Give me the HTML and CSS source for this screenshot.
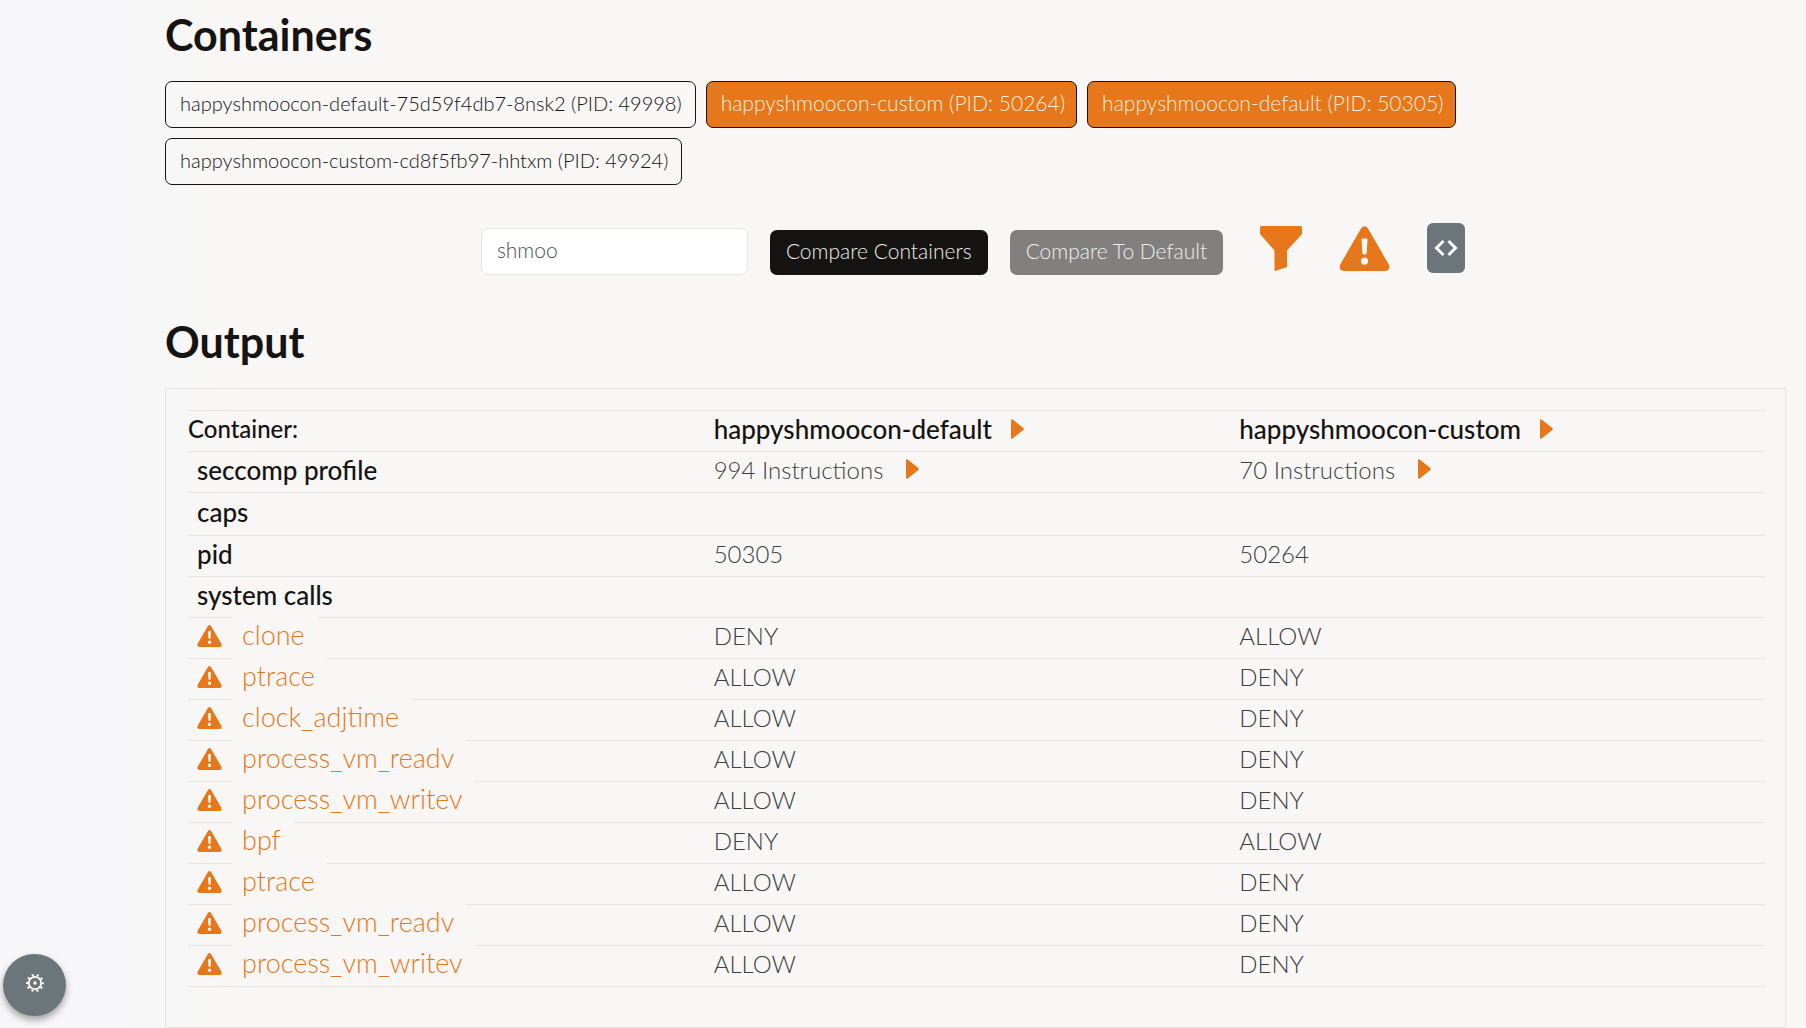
FILE: index.html
```html
<!DOCTYPE html>
<html lang="en">
<head>
<meta charset="utf-8">
<meta name="viewport" content="width=device-width, initial-scale=1">
<title>Containers</title>
<link rel="stylesheet" href="styles.css">
</head>
<body>
<svg class="sprite" aria-hidden="true">
  <symbol id="warning" viewBox="0 0 50 45"><path fill="currentColor" fill-rule="evenodd" d="M21.800 2Q25-1.600 28.200 2L49.300 38.500Q51.200 44.500 46 45H4Q-1.200 44.500.700 38.500ZM22 13.500 22.800 27Q23 28.500 25 28.500Q27 28.500 27.200 27L28 13.500Q28 12.500 26.500 12.500H23.500Q22 12.500 22 13.500ZM25 31.500A3.600 3.600 0 1 0 25 38.700A3.600 3.600 0 1 0 25 31.500Z"/></symbol>
  <symbol id="caret" viewBox="0 0 13 20"><path fill="currentColor" d="M0 1.500Q0-.5 2 .8L12.300 9Q13.300 10 12.300 11L2 19.200Q0 20.500 0 18.500Z"/></symbol>
</svg>
<main class="page">
  <section>
    <h1 class="title">Containers</h1>
    <div class="containers">
      <button class="chip" type="button">happyshmoocon-default-75d59f4db7-8nsk2 (PID: 49998)</button>
      <button class="chip selected" type="button">happyshmoocon-custom (PID: 50264)</button>
      <button class="chip selected" type="button">happyshmoocon-default (PID: 50305)</button>
      <button class="chip" type="button">happyshmoocon-custom-cd8f5fb97-hhtxm (PID: 49924)</button>
    </div>
    <div class="toolbar">
      <input class="search" type="text" value="shmoo" aria-label="Filter containers">
      <button class="btn dark" type="button">Compare Containers</button>
      <button class="btn muted" type="button">Compare To Default</button>
      <div class="tools">
        <button class="icon-btn" type="button" aria-label="Filter"><svg width="42" height="45" viewBox="0 0 42 45"><path fill="currentColor" d="M1.500 0H40.500Q42 0 42 1.500V8L27 24.500V41L15.500 45Q14.500 45 14.500 44V24.500L0 8V1.500Q0 0 1.500 0Z"/></svg></button>
        <button class="icon-btn" type="button" aria-label="Warnings"><svg width="51" height="45"><use href="#warning"/></svg></button>
        <button class="code-btn" type="button" aria-label="Show code"><svg width="24" height="18" viewBox="0 0 24 18" fill="none" stroke="currentColor" stroke-width="3"><path d="M9.500 2 2.500 9l7 7M14.500 2l7 7-7 7"/></svg></button>
      </div>
    </div>
  </section>
  <section>
    <h2 class="title">Output</h2>
    <div class="panel">
      <table class="output">
        <thead>
          <tr>
            <th class="label" scope="col">Container:</th>
            <th scope="col">happyshmoocon-default<button class="expand" type="button" aria-label="Expand happyshmoocon-default"><svg width="13" height="20"><use href="#caret"/></svg></button></th>
            <th scope="col">happyshmoocon-custom<button class="expand" type="button" aria-label="Expand happyshmoocon-custom"><svg width="13" height="20"><use href="#caret"/></svg></button></th>
          </tr>
        </thead>
        <tbody>
          <tr><th scope="row">seccomp profile</th>
            <td>994 Instructions<button class="expand wide" type="button" aria-label="Expand 994 instructions"><svg width="13" height="20"><use href="#caret"/></svg></button></td>
            <td>70 Instructions<button class="expand wide" type="button" aria-label="Expand 70 instructions"><svg width="13" height="20"><use href="#caret"/></svg></button></td></tr>
          <tr class="caps"><th scope="row">caps</th><td></td><td></td></tr>
          <tr><th scope="row">pid</th><td>50305</td><td>50264</td></tr>
          <tr><th scope="row">system calls</th><td></td><td></td></tr>
          <tr><th scope="row"><div class="call"><svg width="25" height="22"><use href="#warning"/></svg><button class="name" type="button">clone</button></div></th><td>DENY</td><td>ALLOW</td></tr>
          <tr><th scope="row"><div class="call"><svg width="25" height="22"><use href="#warning"/></svg><button class="name" type="button">ptrace</button></div></th><td>ALLOW</td><td>DENY</td></tr>
          <tr><th scope="row"><div class="call"><svg width="25" height="22"><use href="#warning"/></svg><button class="name" type="button">clock_adjtime</button></div></th><td>ALLOW</td><td>DENY</td></tr>
          <tr><th scope="row"><div class="call"><svg width="25" height="22"><use href="#warning"/></svg><button class="name" type="button">process_vm_readv</button></div></th><td>ALLOW</td><td>DENY</td></tr>
          <tr><th scope="row"><div class="call"><svg width="25" height="22"><use href="#warning"/></svg><button class="name" type="button">process_vm_writev</button></div></th><td>ALLOW</td><td>DENY</td></tr>
          <tr><th scope="row"><div class="call"><svg width="25" height="22"><use href="#warning"/></svg><button class="name" type="button">bpf</button></div></th><td>DENY</td><td>ALLOW</td></tr>
          <tr><th scope="row"><div class="call"><svg width="25" height="22"><use href="#warning"/></svg><button class="name" type="button">ptrace</button></div></th><td>ALLOW</td><td>DENY</td></tr>
          <tr><th scope="row"><div class="call"><svg width="25" height="22"><use href="#warning"/></svg><button class="name" type="button">process_vm_readv</button></div></th><td>ALLOW</td><td>DENY</td></tr>
          <tr><th scope="row"><div class="call"><svg width="25" height="22"><use href="#warning"/></svg><button class="name" type="button">process_vm_writev</button></div></th><td>ALLOW</td><td>DENY</td></tr>
        </tbody>
      </table>
    </div>
  </section>
</main>
<button class="settings" type="button" aria-label="Settings"><svg width="20" height="20" viewBox="-10 -10 20 20"><circle r="6.200" fill="none" stroke="currentColor" stroke-width="1.800"/><circle r="8" fill="none" stroke="currentColor" stroke-width="2" stroke-dasharray="2.100 2.927" stroke-dashoffset="1.050"/><circle r="1.700" fill="currentColor"/></svg></button>
</body>
</html>
```
FILE: styles.css
```css
:root {
  --orange: #e6771b;
  --ink: #151412;
  --slate: #6b757a;
  --paper: #f8f7f5;
  --rule: #e5e4e3;
}

* { box-sizing: border-box; }

body {
  margin: 0;
  background: linear-gradient(to right, #f7f6f9 60px, var(--paper) 260px);
  color: #3c3e40;
  font-family: Lato, sans-serif;
  font-size: 20px;
  font-weight: 300;
}

button, input { font: inherit; }
button { border: 0; padding: 0; background: none; color: inherit; cursor: pointer; }
svg { display: block; }
.sprite { position: absolute; width: 0; height: 0; }

.page { padding: 13px 20px 0 165px; }

.title {
  margin: 0 0 24px;
  color: var(--ink);
  font-size: 43px;
  font-weight: 700;
  line-height: 44px;
}

.containers { display: flex; flex-wrap: wrap; gap: 10px; max-width: 1400px; }

.chip {
  height: 47px;
  padding: 0 13px 4px 14px;
  border: 1px solid var(--ink);
  border-radius: 7px;
  color: var(--ink);
}
.chip.selected { padding-right: 11px; background: var(--orange); color: #fdeedd; font-size: 21px; }

.toolbar {
  display: flex;
  justify-content: center;
  align-items: flex-end;
  gap: 22px;
  padding: 38px 5px 45px 0;
}
.search {
  width: 267px;
  height: 47px;
  padding: 0 15px 4px;
  border: 1px solid var(--rule);
  border-radius: 7px;
  background: #fff;
  color: #4a4e52;
  font-size: 21px;
}
.btn { height: 45px; padding: 0 16px 4px; border-radius: 7px; color: #eee; font-size: 21px; }
.btn.dark { background: var(--ink); }
.btn.muted { background: #82807e; }

.tools { display: flex; align-items: center; gap: 37px; margin: 0 0 2px 15px; }
.icon-btn { color: var(--orange); }
.code-btn {
  display: grid;
  place-items: center;
  width: 38px;
  height: 50px;
  border-radius: 6px;
  background: var(--slate);
  color: #fff;
}

.panel { padding: 21px 20px 40px 22px; border: 1px solid var(--rule); }

.output {
  width: 100%;
  border-collapse: collapse;
  table-layout: fixed;
  font-size: 24px;
  line-height: 28px;
}
.output tr { height: 41px; border: 1px solid var(--rule); border-width: 1px 0; }
.output tr.caps { height: 43px; }
.output th, .output td { padding: 0 0 4px; text-align: left; }
.output th { color: var(--ink); font-size: 26px; font-weight: 500; }
.output th.label { font-size: 24px; }
.output tbody th { padding: 0 0 4px 9px; }

.expand { margin-left: 19px; color: var(--orange); }
.expand.wide { margin-left: 23px; }

.call { display: flex; align-items: center; height: 36px; color: var(--orange); }
.name {
  flex: none;
  height: 44px;
  margin-left: 10px;
  padding: 0 12px 2px 10px;
  background: var(--paper);
  font-size: 27px;
  font-weight: 300;
}

.settings {
  position: fixed;
  left: 3px;
  bottom: 12px;
  display: grid;
  place-items: center;
  width: 63px;
  height: 62px;
  padding-bottom: 4px;
  border-radius: 50%;
  background: var(--slate);
  color: #fff;
  box-shadow: 0 4px 7px rgba(0, 0, 0, .35);
}
```
